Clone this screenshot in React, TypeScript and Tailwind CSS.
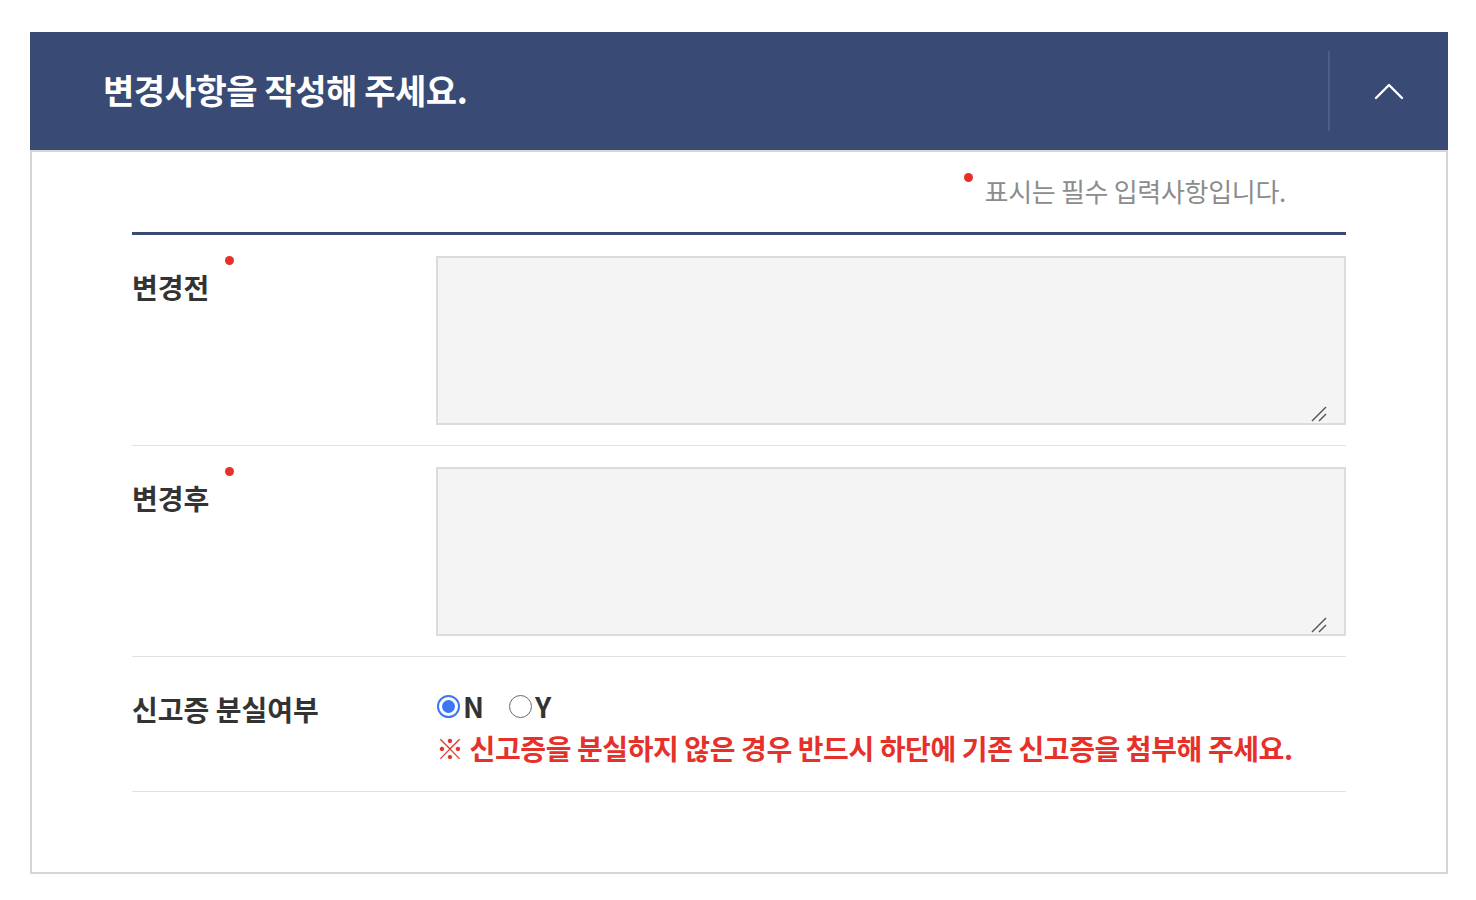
import React from "react";

const font = { fontFamily: '"Noto Sans CJK KR", "Noto Sans", sans-serif' };

function Dot({ className = "" }: { className?: string }) {
  return <span className={`inline-block w-[9px] h-[9px] rounded-full bg-[#e5312a] ${className}`} />;
}

function Area() {
  return (
    <div className="relative flex-1 h-[169px]">
      <textarea className="block w-full h-full bg-[#f4f4f4] border-2 border-[#dcdcdc] outline-none resize-none" />
      <svg className="absolute right-[19px] bottom-[3px]" width="16" height="16" viewBox="0 0 16 16">
        <path d="M1 15 L15 1" stroke="#555" strokeWidth="1.4" />
        <path d="M8 15 L15 8" stroke="#555" strokeWidth="1.4" />
      </svg>
    </div>
  );
}

export default function App() {
  return (
    <div className="bg-white w-[1476px] h-[900px] pt-[32px] px-[30px]" style={font}>
      <div className="w-[1418px]">
        <div className="h-[118px] bg-[#394b75] flex items-center">
          <h2 className="flex-1 pl-[73px] text-white text-[34px] font-bold tracking-[-0.45px] leading-none pb-[2px]">
            변경사항을 작성해 주세요.
          </h2>
          <div className="w-[2px] h-[80px] bg-[#4d5e86]" />
          <div className="w-[118px] h-full flex items-center justify-center">
            <svg width="30" height="18" viewBox="0 0 30 18" fill="none">
              <path d="M2 16 L15 3 L28 16" stroke="white" strokeWidth="2.4" strokeLinecap="round" strokeLinejoin="round" />
            </svg>
          </div>
        </div>
        <div className="border-2 border-[#d6d6d6] h-[724px] px-[100px]">
          <div className="h-[80px] flex items-start justify-end pr-[60px] pt-[20px]">
            <Dot className="mt-[1px] mr-[12px]" />
            <span className="text-[26px] text-[#8c8c8c] tracking-[-0.3px] leading-[38px]">표시는 필수 입력사항입니다.</span>
          </div>
          <div className="border-t-[3px] border-[#394b75]">
            {["변경전", "변경후"].map((l) => (
              <div key={l} className="flex border-b border-[#e2e2e2] pt-[21px] pb-[20px]">
                <div className="w-[304px] pt-[11px] flex items-start">
                  <span className="text-[28px] font-bold text-[#333] leading-[40px]">{l}</span>
                  <Dot className="ml-[16px] mt-[-11px]" />
                </div>
                <Area />
              </div>
            ))}
            <div className="flex border-b border-[#e2e2e2] h-[135px] pt-[30px]">
              <div className="w-[304px]">
                <span className="text-[28px] font-bold text-[#333] leading-[40px] block mt-[2px]">신고증 분실여부</span>
              </div>
              <div className="flex-1">
                <div className="flex items-center h-[38px] pl-[1px]">
                  <label className="flex items-center">
                    <span className="w-[23px] h-[23px] rounded-full border-2 border-[#3a78f2] flex items-center justify-center">
                      <span className="w-[13px] h-[13px] rounded-full bg-[#3a78f2]" />
                    </span>
                    <span className="text-[28px] font-bold text-[#333] leading-none ml-[3px]">N</span>
                  </label>
                  <label className="flex items-center ml-[25px]">
                    <span className="w-[23px] h-[23px] rounded-full border-[1.5px] border-[#6b6b6b]" />
                    <span className="text-[28px] font-bold text-[#333] leading-none ml-[3px]">Y</span>
                  </label>
                </div>
                <p className="text-[28px] font-bold text-[#e5312a] tracking-[-0.4px] leading-[40px] mt-[3px]">
                  ※ 신고증을 분실하지 않은 경우 반드시 하단에 기존 신고증을 첨부해 주세요.
                </p>
              </div>
            </div>
          </div>
        </div>
      </div>
    </div>
  );
}
